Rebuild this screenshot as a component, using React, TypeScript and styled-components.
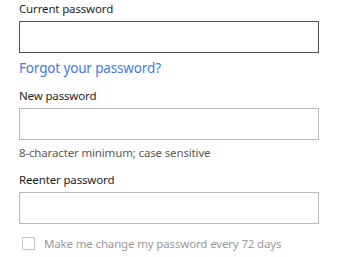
import React from "react";
import styled, { createGlobalStyle } from "styled-components";

const GlobalStyle = createGlobalStyle`
  html, body {
    margin: 0;
    padding: 0;
    background: #ffffff;
  }
  body {
    font-family: "Noto Sans", "Open Sans", sans-serif;
  }
`;

const Form = styled.form`
  display: flex;
  flex-direction: column;
  width: 300px;
  padding: 0 0 0 19px;
`;

const Label = styled.label<{ $gap?: number }>`
  display: block;
  font-size: 11.5px;
  letter-spacing: -0.15px;
  line-height: 17px;
  color: #1e1e1e;
  margin-top: ${(p) => p.$gap ?? 0}px;
  margin-bottom: 4px;
`;

const Field = styled.input<{ $focused?: boolean }>`
  box-sizing: border-box;
  width: 300px;
  height: 32px;
  margin: 0;
  padding: 0 8px;
  border: 1px solid ${(p) => (p.$focused ? "#4f4f4f" : "#b9b9b9")};
  border-radius: 0;
  background: #ffffff;
  outline: none;
  font-family: inherit;
  font-size: 14px;
`;

const ForgotLink = styled.a`
  display: block;
  margin-top: 5px;
  font-size: 13.5px;
  letter-spacing: -0.15px;
  line-height: 20px;
  color: #4577ea;
  text-decoration: none;
`;

const Hint = styled.div`
  margin-top: 4px;
  font-size: 11.5px;
  letter-spacing: -0.15px;
  line-height: 17px;
  color: #5a5a5a;
`;

const CheckRow = styled.label`
  display: flex;
  align-items: center;
  gap: 9px;
  margin-top: 11px;
  padding-left: 3px;
  font-size: 11.5px;
  letter-spacing: -0.15px;
  line-height: 17px;
  color: #9a9a9a;
`;

const Box = styled.span`
  box-sizing: border-box;
  flex: none;
  width: 13px;
  height: 13px;
  border: 1px solid #c4c4c4;
  background: #ffffff;
`;

export default function App() {
  return (
    <>
      <GlobalStyle />
      <Form onSubmit={(e) => e.preventDefault()}>
        <Label>Current password</Label>
        <Field type="password" $focused />
        <ForgotLink href="#">Forgot your password?</ForgotLink>
        <Label $gap={9}>New password</Label>
        <Field type="password" />
        <Hint>8-character minimum; case sensitive</Hint>
        <Label $gap={10}>Reenter password</Label>
        <Field type="password" />
        <CheckRow>
          <Box />
          Make me change my password every 72 days
        </CheckRow>
      </Form>
    </>
  );
}
